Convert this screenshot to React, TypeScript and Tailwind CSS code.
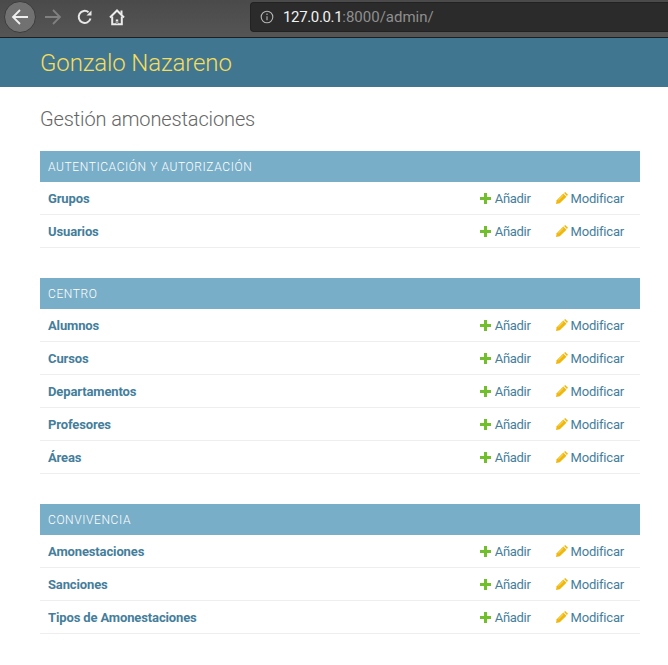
import React from 'react';

const sections = [
  { title: 'Autenticación y Autorización', rows: ['Grupos', 'Usuarios'] },
  { title: 'Centro', rows: ['Alumnos', 'Cursos', 'Departamentos', 'Profesores', 'Áreas'] },
  { title: 'Convivencia', rows: ['Amonestaciones', 'Sanciones', 'Tipos de Amonestaciones'] },
];

const PlusIcon = () => (
  <svg width="11" height="11" viewBox="0 0 11 11" className="shrink-0">
    <path d="M4 0h3v4h4v3H7v4H4V7H0V4h4z" fill="#70bf2b" />
  </svg>
);

const PencilIcon = () => (
  <svg width="12" height="12" viewBox="0 0 12 12" className="shrink-0">
    <path d="M9.2 0L12 2.8L10.9 3.9L8.1 1.1z" fill="#efb80b" />
    <path d="M7.3 1.5L10.5 4.7L3.8 11.3L0 12L0.7 8.2z" fill="#efb80b" />
    <path d="M2.4 8L7.4 3.1" stroke="#fbe6a0" strokeWidth="0.8" />
  </svg>
);

const Row = ({ name }: { name: string }) => (
  <div className="flex h-[33px] items-center border-b border-[#eeeeee] pt-[1px] pr-4 pl-2 text-[13px] text-[#447e9b]">
    <span className="flex-1 font-bold tracking-[-0.13px]">{name}</span>
    <span className="flex items-center">
      <span className="-mt-[1px]"><PlusIcon /></span>
      <span className="ml-1 tracking-[-0.3px]">Añadir</span>
    </span>
    <span className="ml-[25px] flex items-center">
      <span className="-mt-[1px]"><PencilIcon /></span>
      <span className="ml-[3px] tracking-[-0.2px]">Modificar</span>
    </span>
  </div>
);

export default function App() {
  return (
    <div className="h-[665px] w-[668px] overflow-hidden bg-white font-['Roboto',sans-serif]">
      {/* Browser toolbar */}
      <div className="flex h-[38px] items-center border-b border-[#1f1f1f] bg-gradient-to-b from-[#4a4a4a] to-[#555555] pb-[3px]">
        <div className="ml-1 flex h-8 w-8 items-center justify-center rounded-full border border-[#3c3c3c] bg-[#717171]">
          <svg width="18" height="18" viewBox="0 0 18 18" fill="none" stroke="#eeeeee" strokeWidth="1.8">
            <path d="M17 9H2M9 2L2 9l7 7" />
          </svg>
        </div>
        <svg width="18" height="18" viewBox="0 0 18 18" fill="none" stroke="#808080" strokeWidth="1.8" className="ml-[8px]">
          <path d="M1 9h15M9 2l7 7-7 7" />
        </svg>
        <svg width="16" height="16" viewBox="0 0 16 16" fill="none" stroke="#e8e8e8" strokeWidth="2" className="ml-[15px]">
          <path d="M13.5 9.5A6 6 0 1 1 11.5 3.2" />
          <path d="M9.5 6.5h5v-5z" fill="#e8e8e8" stroke="none" />
        </svg>
        <svg width="16" height="18" viewBox="0 0 16 18" fill="none" stroke="#ececec" className="ml-[16px]">
          <path d="M1 9.5L8 2.5l7 7" strokeWidth="2" />
          <path d="M3.2 8.5v7.8h9.6V8.5" strokeWidth="2" />
          <path d="M11.5 2.5h2v4h-2z" fill="#ececec" stroke="none" />
          <path d="M6.8 11.5h2.4v4.8H6.8z" fill="#ececec" stroke="none" />
          <path d="M7.5 13h1v3h-1z" fill="#4f4f4f" stroke="none" />
        </svg>
        <div className="ml-[125px] flex h-[30px] flex-1 items-center rounded-l-[4px] border border-r-0 border-[#222222] bg-[#2b2b2b] pl-2 text-[15px]">
          <svg width="14" height="14" viewBox="0 0 14 14" fill="none" stroke="#b4b4b4" strokeWidth="1.1" className="ml-[1px]">
            <circle cx="7" cy="7" r="5.8" />
            <path d="M7 6.2v4M7 3.6v1.3" />
          </svg>
          <span className="ml-[9px] tracking-[-0.35px] text-[#f2f2f2]">127.0.0.1</span>
          <span className="text-[#8f8f8f]">:8000/admin/</span>
        </div>
      </div>

      {/* Django header */}
      <div className="flex h-[49px] items-center bg-[#417690] pr-7 pl-10 text-2xl font-light tracking-[-0.12px] text-[#f5dd5d]">
        Gonzalo Nazareno
      </div>

      <div className="pr-7 pl-10">
        <h1 className="mt-[20px] h-[44px] text-xl leading-6 font-light tracking-[-0.13px] text-[#666666]">Gestión amonestaciones</h1>
        <div className="flex flex-col gap-[30px]">
          {sections.map((s) => (
            <div key={s.title}>
              <div className="flex h-[31px] items-center bg-[#79aec8] px-2 text-xs font-light tracking-[0.6px] text-white uppercase">
                {s.title}
              </div>
              {s.rows.map((r) => (
                <Row key={r} name={r} />
              ))}
            </div>
          ))}
        </div>
      </div>
    </div>
  );
}
